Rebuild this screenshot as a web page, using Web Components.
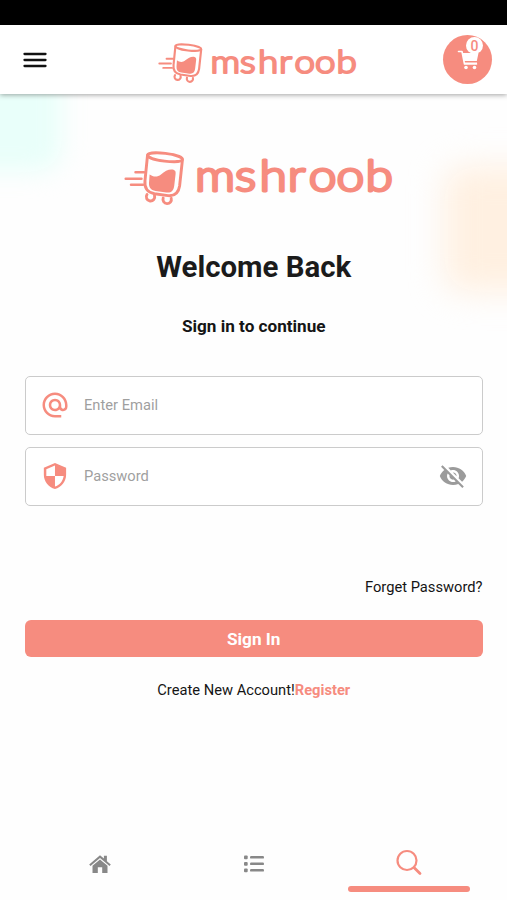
<!DOCTYPE html>
<html lang="en">
<head>
<meta charset="utf-8">
<title>mshroob – Sign In</title>
<style>
html,body{margin:0;height:100%;overflow:hidden;background:#fefefe}
body{--coral:#f68c7f;font-family:Roboto,"Liberation Sans",sans-serif}
</style>
</head>
<body>
<sign-in-page></sign-in-page>
<script>
const define = (name, css, html) => customElements.define(name, class extends HTMLElement {
  constructor() {
    super();
    const t = document.createElement('template');
    t.innerHTML = `<style>*{box-sizing:border-box}svg{display:block}${css}</style>${html}`;
    this.attachShadow({mode: 'open'}).append(t.content.cloneNode(true));
  }
});

define('brand-logo', `
:host{display:block;width:270px}
svg{width:100%;height:auto;overflow:visible}
text{font-family:Lato,sans-serif;font-weight:300;font-size:42.500px;fill:var(--coral);stroke:var(--coral);stroke-width:2.900;stroke-linejoin:round}
`, `<svg viewBox="124 151 270 55" fill="none" stroke="var(--coral)" stroke-width="2.9" stroke-linecap="round" stroke-linejoin="round">
<ellipse cx="165" cy="157.3" rx="17.6" ry="3.9" transform="rotate(7 165 157.3)"/>
<path d="M147.5 155.5 145 180.500C144.200 188 147.500 192.500 154.500 193.700L168 195.600C175 196.300 178.600 192.500 179.600 186L182.400 160"/>
<path stroke="none" fill="var(--coral)" d="M149.600 174.500C153 176.800 157 177.800 161 174.500C165 170.800 169.500 168.800 173.500 169.800C175.500 170.400 175.800 172 175.600 174L174.200 186C173.500 191 171 193 166.500 192.500L155.500 191C150.800 190 148.800 187.500 149 183Z"/>
<path stroke-width="2.500" d="M135.500 172.300H144M125.700 178.700H141.500M131 184.700H143"/>
<path d="M147 194.500A4.200 4.200 0 1 0 154.500 195.500M163.200 198A4.200 4.200 0 1 0 171.200 198.300"/>
<text transform="translate(195.500 0) scale(1.17 1)" y="191.200" x="-0.400 33.700 54.600 78.800 96.700 120.600 145.400">mshroob</text></svg>`);

define('menu-button', `:host{display:block}svg{width:24px;height:24px}`,
`<svg viewBox="0 0 24 24" stroke="#111" stroke-width="2.3" stroke-linecap="round"><path d="M1.500 6H22.500M1.500 12H22.500M1.500 18H22.500"/></svg>`);

define('cart-button', `
:host{display:grid;place-items:center;position:relative;width:49px;height:49px;border-radius:50%;background:var(--coral)}
svg{width:24px;height:22px;margin:0 0 0 3px}
span{position:absolute;left:23px;top:2px;width:17px;height:17px;border-radius:50%;background:#fff;color:var(--coral);font-size:14px;font-weight:500;line-height:18px;text-align:center}
`, `<svg viewBox="0 0 24 22" fill="none" stroke="#fff" stroke-width="1.600"><path d="M1.500 2.500H5L7.500 15H19.500" stroke-linejoin="round" stroke-linecap="round"/><path fill="#fff" stroke="none" d="M5.500 4H21.500L19.800 12H7ZM8 13.500H20V15H8Z"/><circle cx="9" cy="18.500" r="1.800" fill="#fff" stroke="none"/><circle cx="17.500" cy="18.500" r="1.800" fill="#fff" stroke="none"/></svg><span><slot></slot></span>`);

define('app-header', `
:host{display:grid;grid-template-columns:1fr auto 1fr;align-items:center;height:69px;padding:0 15px 0 23px;background:#fff;box-shadow:0 1px 5px rgba(0,0,0,.36);position:relative;z-index:1}
brand-logo{width:199.500px;margin:8px 0 0 0}
cart-button{justify-self:end}
`, `<menu-button></menu-button><brand-logo></brand-logo><cart-button>0</cart-button>`);

define('form-field', `
:host{display:flex;align-items:center;height:59px;border:1px solid #cbcbcb;border-radius:5px;background:#fff;padding:0 14px 1px 14px;color:#9f9f9f;font-size:14.700px}
.label{flex:1;padding-left:14px}
::slotted(svg){display:block;width:30px;height:30px}
`, `<slot name="lead"></slot><span class="label"><slot></slot></span><slot name="trail"></slot>`);

define('primary-button', `
:host{display:block}
button{display:block;width:100%;height:37px;border:0;border-radius:6px;padding:0;background:var(--coral);color:#fff;font:700 17.200px/38px Roboto,sans-serif}
`, `<button><slot></slot></button>`);

define('bottom-nav', `
:host{display:grid;grid-template-columns:repeat(3,154.500px);justify-content:center;height:76px;padding-left:1px}
div{display:flex;flex-direction:column;align-items:center}
svg{margin-top:28px}
i{width:122px;height:6px;border-radius:3px;background:var(--coral);margin-top:9px}
`, `<div><svg width="24" height="24" viewBox="0 0 24 24" fill="#888"><path d="M1.200 12.600 12 3.300 15.900 6.600V3.800H18.900V9.200L22.800 12.600 21.500 14.100 12 6 2.500 14.100Z"/><path d="M4.500 13.700 12 7.400 19.500 13.700V21H14.200V15.200H9.800V21H4.500Z"/></svg></div>
<div><svg width="24" height="24" viewBox="0 0 24 24" fill="#888"><rect x="2" y="3.500" width="3.700" height="3.700" rx="1"/><rect x="2" y="10" width="3.700" height="3.700" rx="1"/><rect x="2" y="16.500" width="3.700" height="3.700" rx="1"/><rect x="8" y="4.100" width="14" height="2.500" rx="1.200"/><rect x="8" y="10.600" width="14" height="2.500" rx="1.200"/><rect x="8" y="17.100" width="14" height="2.500" rx="1.200"/></svg></div>
<div><svg style="margin-top:25px" width="28" height="28" viewBox="0 0 28 28" fill="none" stroke="var(--coral)" stroke-linecap="round"><circle cx="12" cy="11.500" r="9.500" stroke-width="2.200"/><path d="m19.200 18.700 5.800 5.800" stroke-width="2.800"/></svg><i></i></div>`);

define('sign-in-page', `
:host{display:flex;flex-direction:column;height:900px;width:507px;position:relative;overflow:hidden;background:#fefefe}
.status{height:25px;background:#000;position:relative;z-index:2}
.glow{position:absolute;pointer-events:none}
.mint{left:-40px;top:60px;width:102px;height:112px;background:#e9fffa;border-radius:0 0 24px 0;filter:blur(12px)}
.peach{left:444px;top:166px;width:140px;height:126px;background:#fff0e1;border-radius:20px;filter:blur(16px)}
main{flex:1;display:flex;flex-direction:column;padding:0 24.500px 0 25px;position:relative}
brand-logo{align-self:center;margin:57px 0 0 10px}
h1{margin:44px 0 0;font-size:29.400px;line-height:34px;font-weight:700;text-align:center;color:#1b1b1b}
h2{margin:32px 0 0;font-size:17.150px;line-height:20px;font-weight:700;text-align:center;color:#151515}
.fields{display:grid;gap:12px;margin-top:40px}
.forgot{align-self:flex-end;margin-top:71px;font-size:14.700px;line-height:20px;color:#151515}
primary-button{margin-top:23px}
.create{margin:23px 0 0;text-align:center;font-size:14.700px;line-height:20px;color:#151515}
.create b{color:var(--coral)}
`, `<div class="glow mint"></div><div class="glow peach"></div>
<div class="status"></div><app-header></app-header>
<main><brand-logo></brand-logo><h1>Welcome Back</h1><h2>Sign in to continue</h2>
<div class="fields">
<form-field><svg slot="lead" viewBox="0 0 24 24" fill="var(--coral)"><path d="M12 2C6.480 2 2 6.480 2 12s4.480 10 10 10h5v-2h-5c-4.340 0-8-3.660-8-8s3.660-8 8-8 8 3.660 8 8v1.430c0 .790-.710 1.570-1.500 1.570s-1.500-.780-1.500-1.570V12c0-2.760-2.240-5-5-5s-5 2.240-5 5 2.240 5 5 5c1.380 0 2.640-.560 3.540-1.470.650.890 1.770 1.470 2.960 1.470 1.970 0 3.500-1.600 3.500-3.570V12c0-5.520-4.480-10-10-10zm0 13c-1.660 0-3-1.340-3-3s1.340-3 3-3 3 1.340 3 3-1.340 3-3 3z"/></svg>Enter Email</form-field>
<form-field><svg slot="lead" viewBox="0 0 24 24" fill="var(--coral)"><path d="M12 1 3 5v6c0 5.550 3.840 10.740 9 12 5.160-1.260 9-6.450 9-12V5l-9-4zm0 10.990h7c-.530 4.120-3.280 7.790-7 8.940V12H5V6.300l7-3.110v8.800z" transform="translate(0.100 0.600) scale(.99 .95)"/></svg>Password<svg slot="trail" viewBox="0 0 24 24" fill="#9b9b9b"><path d="M12 7c2.760 0 5 2.240 5 5 0 .650-.130 1.260-.360 1.830l2.920 2.920c1.510-1.260 2.700-2.890 3.430-4.750-1.730-4.390-6-7.500-11-7.500-1.400 0-2.740.250-3.980.700l2.160 2.160C10.740 7.130 11.350 7 12 7zM2 4.270l2.280 2.280.460.460C3.080 8.300 1.780 10.020 1 12c1.730 4.390 6 7.500 11 7.500 1.550 0 3.030-.300 4.380-.840l.420.420L19.730 22 21 20.730 3.270 3 2 4.270zM7.530 9.800l1.550 1.550c-.050.210-.080.430-.080.650 0 1.660 1.340 3 3 3 .220 0 .440-.030.650-.080l1.550 1.550c-.670.330-1.410.530-2.200.530-2.760 0-5-2.240-5-5 0-.790.200-1.530.530-2.200zm4.310-.780 3.150 3.150.020-.160c0-1.660-1.340-3-3-3l-.170.010z" transform="translate(.5 .5) scale(.96)"/></svg></form-field>
</div>
<div class="forgot">Forget Password?</div>
<primary-button>Sign In</primary-button>
<p class="create">Create New Account!<b>Register</b></p>
</main><bottom-nav></bottom-nav>`);
</script>
</body>
</html>
